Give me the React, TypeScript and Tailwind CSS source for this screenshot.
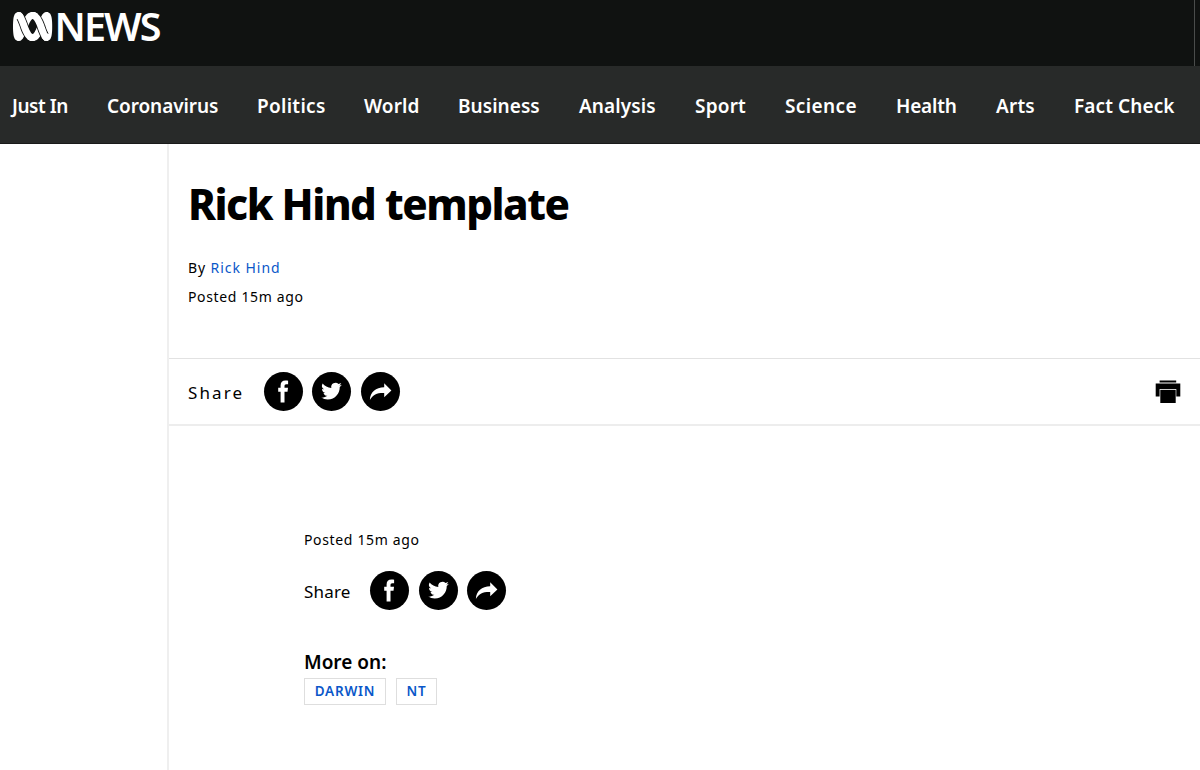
import type { ReactNode } from 'react';

const navItems: { label: string; className: string }[] = [
  { label: 'Just In', className: 'w-[56px] tracking-[-0.45px]' },
  { label: 'Coronavirus', className: 'w-[111px] tracking-[-0.08px]' },
  { label: 'Politics', className: 'w-[68px] tracking-[0.3px]' },
  { label: 'World', className: 'w-[55px] tracking-[0.1px]' },
  { label: 'Business', className: 'w-[82px] tracking-[0.05px]' },
  { label: 'Analysis', className: 'w-[77px] tracking-[0.1px]' },
  { label: 'Sport', className: 'w-[51px] tracking-[0.2px]' },
  { label: 'Science', className: 'w-[72px] tracking-[0.4px]' },
  { label: 'Health', className: 'w-[61px] tracking-[-0.2px]' },
  { label: 'Arts', className: 'w-[39px] tracking-[0.2px]' },
  { label: 'Fact Check', className: 'w-[101px] tracking-[0.1px]' },
];

// Lissajous curve with squared-off sides, angles in degrees
function curve(from: number, to: number) {
  let d = '';
  for (let a = from; a <= to; a += 3) {
    const t = (a * Math.PI) / 180;
    const c = Math.cos(t);
    const s = Math.sin(3 * t);
    const x = 32.6 + 16.1 * Math.sign(c) * Math.abs(c) ** 0.95;
    const y = 26.5 - 11.1 * Math.sign(s) * Math.abs(s) ** 0.9;
    d += `${d ? 'L' : 'M'}${x.toFixed(2)} ${y.toFixed(2)}`;
  }
  return d;
}

function Logo() {
  return (
    <svg width="170" height="54" viewBox="0 0 170 54" fill="none" aria-label="ABC News">
      <path d={curve(0, 360)} stroke="#fff" strokeWidth="7" strokeLinejoin="round" />
      <path d={curve(99, 138)} stroke="#101211" strokeWidth="8.6" />
      <path d={curve(279, 318)} stroke="#101211" strokeWidth="8.6" />
      <path d={curve(90, 150)} stroke="#fff" strokeWidth="7" />
      <path d={curve(270, 330)} stroke="#fff" strokeWidth="7" />
      <text
        x="54.5"
        y="40.5"
        fill="#fff"
        fontSize="39.5"
        fontWeight="600"
        textLength="107"
        lengthAdjust="spacing"
      >
        NEWS
      </text>
    </svg>
  );
}

function Round({ label, children }: { label: string; children: ReactNode }) {
  return (
    <button aria-label={label} className="h-[39px] w-[39px] rounded-full bg-black">
      <svg viewBox="0 0 39 39" fill="#fff" className="h-full w-full">
        {children}
      </svg>
    </button>
  );
}

function ShareButtons() {
  return (
    <div className="flex gap-[9.5px]">
      <Round label="Facebook">
        <path d="M16.6 30.5V19.8h-2.4v-4h2.4v-2.2c0-3.2 1.8-5 4.8-5 1.2 0 2.2.1 2.7.2v3.5h-1.8c-1.4 0-1.8.8-1.8 1.9v1.6h3.5l-.5 4h-3v10.7z" />
      </Round>
      <Round label="Twitter">
        <g transform="translate(9.2 8.8) scale(.86)">
          <path d="M23.95 4.57a10 10 0 0 1-2.82.77 4.96 4.96 0 0 0 2.16-2.72c-.95.55-2 .95-3.13 1.18a4.92 4.92 0 0 0-8.38 4.48C7.69 8.1 4.07 6.13 1.64 3.16a4.92 4.92 0 0 0 1.52 6.57 4.9 4.9 0 0 1-2.23-.61v.06a4.92 4.92 0 0 0 3.95 4.83 5 5 0 0 1-2.21.08 4.94 4.94 0 0 0 4.6 3.42A9.87 9.87 0 0 1 0 19.54a14 14 0 0 0 7.55 2.21c9.05 0 14-7.5 14-13.98l-.02-.64a9.94 9.94 0 0 0 2.42-2.56z" />
        </g>
      </Round>
      <Round label="More sharing options">
        <path d="M23.2 11.3l7.2 7.3-7.2 6.6v-4.1c-6.5-.3-11.3 1.4-14.3 7 .2-8.1 6-12.5 14.3-12.8z" />
      </Round>
    </div>
  );
}

function Printer() {
  return (
    <svg width="26" height="24" viewBox="0 0 26 24" fill="#000" aria-label="Print">
      <path d="M4.6.4h16.6v2H4.6zM.7 3.6h24.6v12.8h-4V9H4.6v7.4H.7z" />
      <path d="M5.3 9.8h15.4v13.2H5.3z" />
    </svg>
  );
}

export default function App() {
  return (
    <div className="h-[770px] w-[1200px] overflow-hidden bg-white font-['Noto_Sans',sans-serif] text-black">
      <header>
        <div className="flex h-[66px] justify-between bg-[#101211]">
          <Logo />
          <div className="w-[6px] border-l border-[#4a4c4b]" />
        </div>
        <nav className="flex h-[78px] items-center gap-[39px] border-b border-[#191a1a] bg-[#282a29] pl-[12px] pt-[4px]">
          {navItems.map((item) => (
            <a
              key={item.label}
              href="#"
              className={`shrink-0 whitespace-nowrap text-[19px] font-semibold text-white ${item.className}`}
            >
              {item.label}
            </a>
          ))}
        </nav>
      </header>

      <main className="ml-[167px] h-[626px] border-l-2 border-[#efefef]">
        <section className="h-[214px] pl-[19px] pt-[31px]">
          <h1 className="whitespace-nowrap text-[42px] font-extrabold leading-[58px] tracking-[-1.45px]">Rick Hind template</h1>
          <p className="mt-[25px] text-[14px] leading-[20px] tracking-[0.85px]">
            By <a href="#" className="tracking-[0.98px] text-[#0a57c9]">Rick Hind</a>
          </p>
          <p className="mt-[9px] text-[14px] leading-[20px] tracking-[0.65px]">Posted 15m ago</p>
        </section>

        <section className="flex h-[68px] items-center justify-between border-b-2 border-t border-b-[#ededed] border-t-[#e2e2e2] pl-[19px] pr-[19px]">
          <div className="flex items-center">
            <span className="w-[75.5px] pt-[2px] text-[17px] tracking-[2.1px]">Share</span>
            <ShareButtons />
          </div>
          <Printer />
        </section>

        <section className="pl-[135px] pt-[104px]">
          <p className="text-[14px] leading-[20px] tracking-[0.65px]">Posted 15m ago</p>
          <div className="mt-[21px] flex items-center">
            <span className="w-[66px] pt-[2px] text-[17px] tracking-[0.2px]">Share</span>
            <ShareButtons />
          </div>
          <h2 className="mt-[38px] text-[19px] font-semibold leading-[28px]">More on:</h2>
          <div className="mt-[2px] flex gap-[10px]">
            <a href="#" className="flex h-[27px] w-[82px] items-center justify-center border border-[#dedede] text-[13.5px] font-semibold tracking-[0.8px] text-[#0a57c9]">DARWIN</a>
            <a href="#" className="flex h-[27px] w-[41px] items-center justify-center border border-[#dedede] text-[13.5px] font-semibold tracking-[0.8px] text-[#0a57c9]">NT</a>
          </div>
        </section>
      </main>
    </div>
  );
}
